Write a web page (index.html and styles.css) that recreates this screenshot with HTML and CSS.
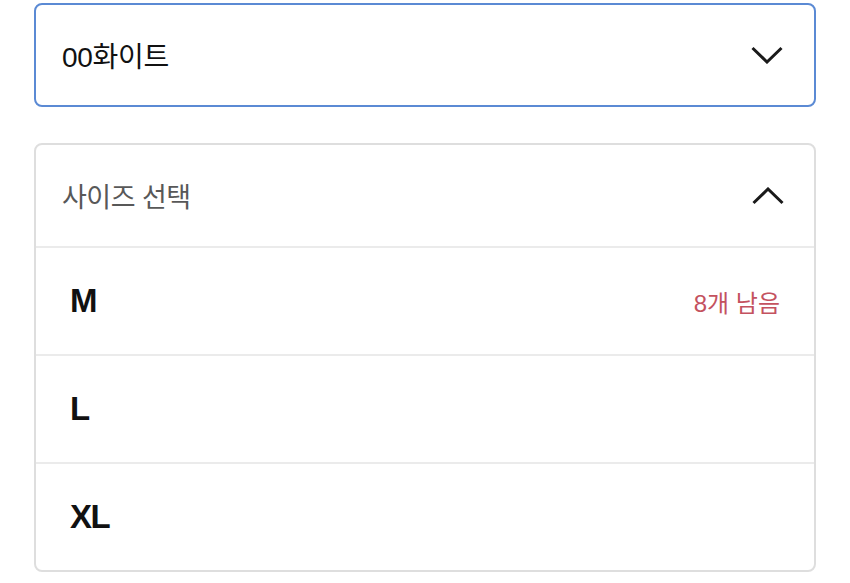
FILE: index.html
```html
<!DOCTYPE html>
<html lang="ko">
<head>
<meta charset="utf-8">
<link rel="stylesheet" href="styles.css">
</head>
<body>
<div class="page">
  <div class="select select-open">
    <span class="select-value">00화이트</span>
    <svg class="chevron" width="32" height="18" viewBox="0 0 32 18"><polyline points="1.5,2 16,16 30.5,2" fill="none" stroke="#1a1a1a" stroke-width="3"/></svg>
  </div>
  <div class="list">
    <div class="list-head">
      <span class="list-title">사이즈 선택</span>
      <svg class="chevron" width="32" height="18" viewBox="0 0 32 18"><polyline points="1.5,16 16,2 30.5,16" fill="none" stroke="#1a1a1a" stroke-width="3"/></svg>
    </div>
    <div class="row"><span class="size">M</span><span class="stock">8개 남음</span></div>
    <div class="row"><span class="size">L</span></div>
    <div class="row"><span class="size size-wide">XL</span></div>
  </div>
</div>
</body>
</html>
```
FILE: styles.css
```css
html, body {
  margin: 0;
  padding: 0;
  background: #ffffff;
}
.page {
  padding: 3px 34px 0 34px;
  width: 782px;
  font-family: "Liberation Sans", "Noto Sans CJK KR", sans-serif;
}
.select {
  box-sizing: border-box;
  height: 104px;
  border: 2px solid #5b8ad4;
  border-radius: 8px;
  display: flex;
  align-items: center;
  justify-content: space-between;
  padding: 0 31px 0 26px;
}
.select-value {
  font-size: 28px;
  color: #111;
  letter-spacing: -0.3px;
}
.chevron {
  display: block;
}
.list {
  margin-top: 36px;
  box-sizing: border-box;
  border: 2px solid #dedede;
  border-radius: 8px;
}
.list-head {
  box-sizing: border-box;
  height: 101px;
  display: flex;
  align-items: center;
  justify-content: space-between;
  padding: 0 30px 0 26px;
}
.list-title {
  font-size: 27px;
  color: #585858;
  letter-spacing: -0.5px;
}
.row {
  box-sizing: border-box;
  height: 108px;
  border-top: 2px solid #ebebeb;
  display: flex;
  align-items: center;
  justify-content: space-between;
  padding: 0 34px 0 34px;
}
.size {
  font-size: 33px;
  font-weight: bold;
  color: #111;
}
.size-wide {
  letter-spacing: -1.5px;
}
.stock {
  font-size: 24px;
  color: #c4525f;
}
```
